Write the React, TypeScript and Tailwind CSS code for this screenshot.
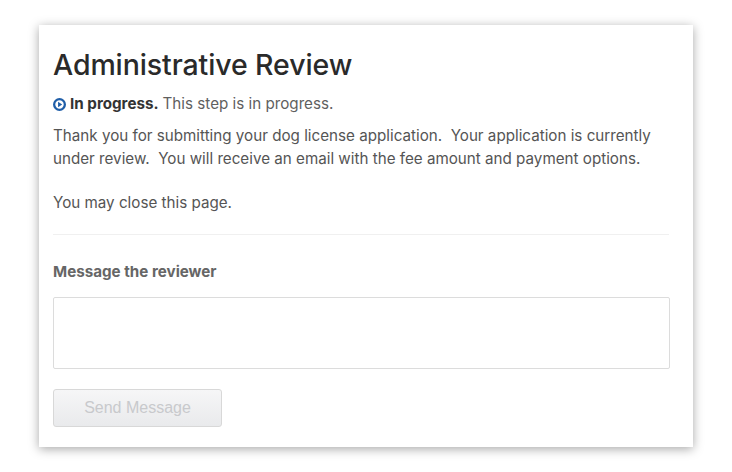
import React from "react";

export default function App() {
  return (
    <div className="w-[732px] h-[472px] bg-white pt-[25px] pl-[39px]" style={{ fontFamily: "Inter, 'Noto Sans', sans-serif" }}>
      <div className="w-[654px] h-[422px] bg-white shadow-[0_2px_10px_rgba(0,0,0,0.35)] px-[14px] pt-[23px]">
        <h1 className="text-[28.5px] leading-[34px] font-medium text-[#2a2a2a] tracking-[-0.1px]">Administrative Review</h1>
        <div className="mt-[11px] flex items-center text-[15.2px] leading-[22px] text-[#5f5f5f]">
          <svg width="13" height="13" viewBox="0 0 16 16" className="mr-[4px]">
            <circle cx="8" cy="8" r="6.6" fill="none" stroke="#1f5ea8" strokeWidth="2.8" />
            <path d="M6.2 4.6 L11.3 8 L6.2 11.4 Z" fill="#1f5ea8" />
          </svg>
          <span className="font-bold text-[#333333]">In progress.</span>
          <span className="ml-[4px]">This step is in progress.</span>
        </div>
        <p className="mt-[8.5px] w-[620px] text-[15.2px] leading-[23px] text-[#555555]">
          Thank you for submitting your dog license application.&nbsp; Your application is currently under review.&nbsp; You will receive an email with the fee amount and payment options.
        </p>
        <p className="mt-[21px] text-[15.2px] leading-[23px] text-[#555555]">You may close this page.</p>
        <div className="mt-[20.5px] w-[616px] border-t border-[#f0f0f0]" />
        <div className="mt-[26px] text-[15.2px] leading-[22px] font-bold text-[#666666]">Message the reviewer</div>
        <div className="mt-[14px] w-[617px] h-[72px] border border-[#dcdcdc] rounded-[2px] bg-white" />
        <button className="mt-[20px] w-[169px] h-[38px] rounded-[3px] border border-[#d8d8d8] bg-gradient-to-b from-[#f6f6f7] to-[#e9eaec] text-[16px] text-[#c8c9cc]" style={{ fontFamily: "'Liberation Sans', Arial, sans-serif" }}>Send Message</button>
      </div>
    </div>
  );
}
